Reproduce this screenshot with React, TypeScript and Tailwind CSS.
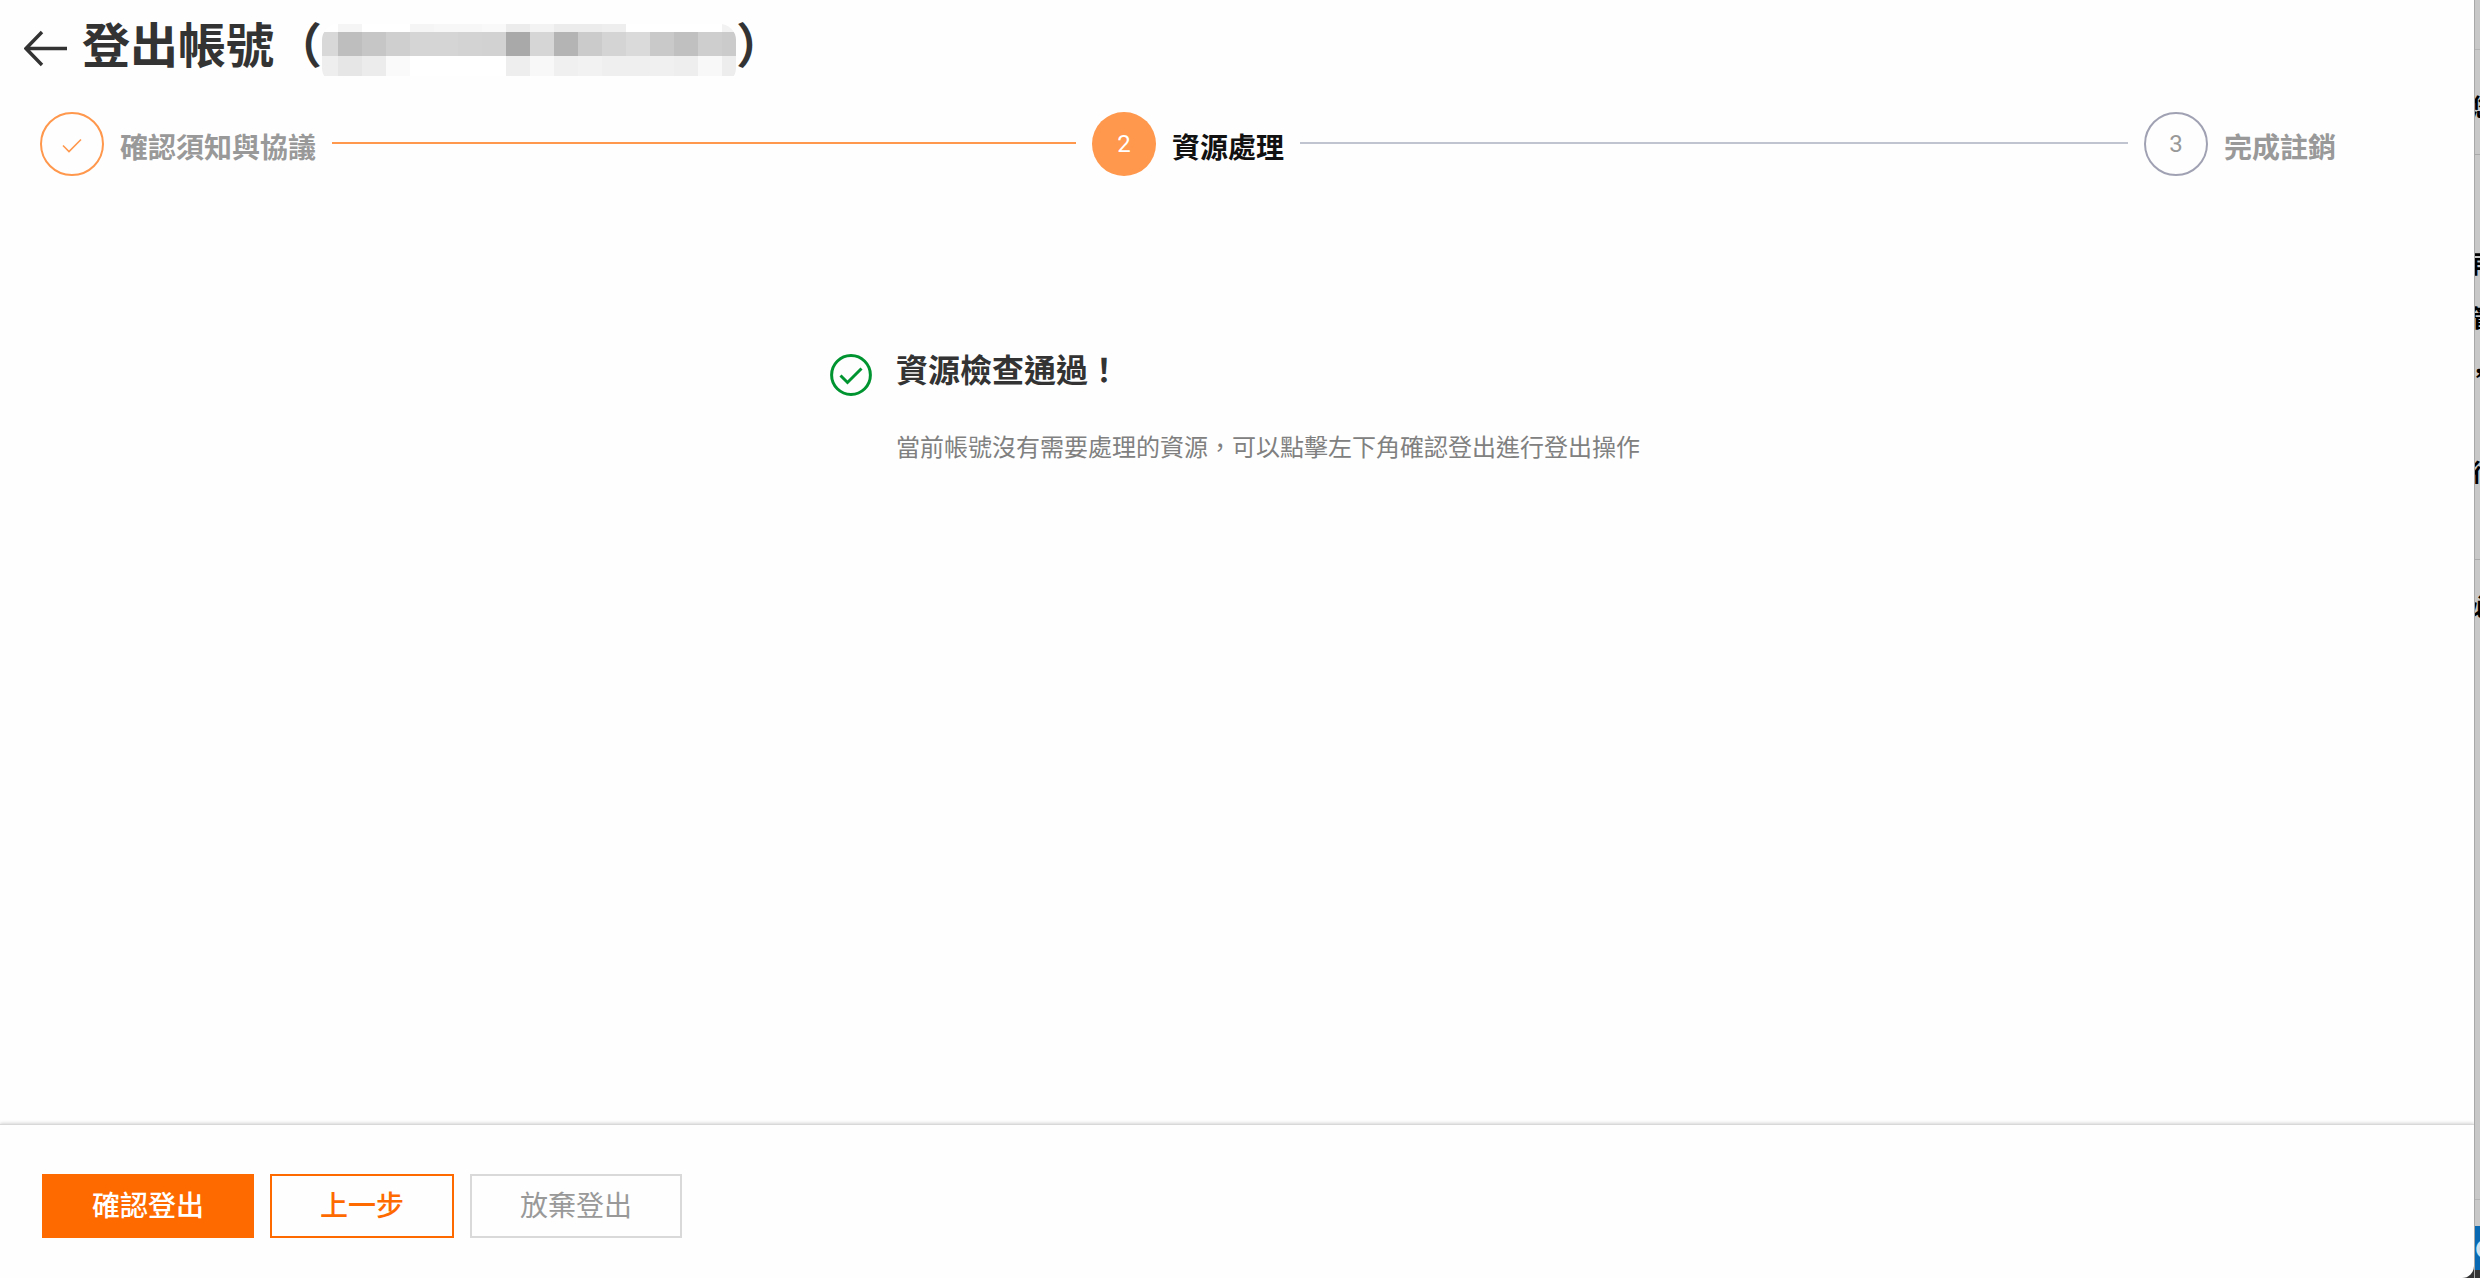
import React from "react";

const mosaicWidths = [
  "w-4", "w-6", "w-6", "w-6", "w-6", "w-6", "w-6", "w-6", "w-6",
  "w-6", "w-6", "w-6", "w-6", "w-6", "w-6", "w-6", "w-6", "w-3.5",
];
const mosaicTop = [
  "bg-white", "bg-[#f5f5f5]", "bg-white", "bg-white", "bg-[#f5f5f5]", "bg-[#f7f7f7]", "bg-[#f7f7f7]", "bg-[#f9f9f9]", "bg-[#ececec]",
  "bg-[#f3f3f3]", "bg-[#ececec]", "bg-[#ececec]", "bg-[#eeeeee]", "bg-white", "bg-white", "bg-white", "bg-white", "bg-[#f2f2f2]",
];
const mosaicMid = [
  "bg-[#d8d8d8]", "bg-[#bebebe]", "bg-[#c6c6c6]", "bg-[#cfcfcf]", "bg-[#d5d5d5]", "bg-[#d5d5d5]", "bg-[#d3d3d3]", "bg-[#d2d2d2]", "bg-[#a9a9a9]",
  "bg-[#d6d6d6]", "bg-[#b4b4b4]", "bg-[#cbcbcb]", "bg-[#d4d4d4]", "bg-[#dadada]", "bg-[#c9c9c9]", "bg-[#c0c0c0]", "bg-[#cecece]", "bg-[#cbcbcb]",
];
const mosaicBottom = [
  "bg-[#eeeeee]", "bg-[#e6e6e6]", "bg-[#ececec]", "bg-[#fafafa]", "bg-white", "bg-white", "bg-white", "bg-white", "bg-[#eeeeee]",
  "bg-[#f8f8f8]", "bg-[#f0f0f0]", "bg-[#f2f2f2]", "bg-[#efefef]", "bg-[#efefef]", "bg-[#f0f0f0]", "bg-[#eeeeee]", "bg-[#f8f8f8]", "bg-[#ededed]",
];

function MaskedAccount() {
  const rows = [
    { height: "h-2", colors: mosaicTop },
    { height: "h-6", colors: mosaicMid },
    { height: "h-5", colors: mosaicBottom },
  ];
  return (
    <span aria-hidden="true" className="mt-6 flex flex-col overflow-hidden rounded-2xl">
      {rows.map((row, r) => (
        <span key={r} className={`flex ${row.height}`}>
          {row.colors.map((color, i) => (
            <span key={i} className={`${mosaicWidths[i]} ${color}`} />
          ))}
        </span>
      ))}
    </span>
  );
}

function Steps() {
  return (
    <ol className="mt-6 flex px-10">
      <li className="flex flex-1 items-center">
        <span className="flex size-16 items-center justify-center rounded-full border-2 border-[#ff974c]">
          <svg viewBox="0 0 20 16" className="mt-1 h-4 w-5" fill="none" stroke="#ff974c" strokeWidth="1.6">
            <path d="M1 7.5 7 13.5 19 1.5" />
          </svg>
        </span>
        <span className="ml-4 pt-1 text-[28px] leading-8 font-bold text-[#999]">確認須知與協議</span>
        <span className="mx-4 mb-0.5 h-0.5 flex-1 bg-[#ff974c]" />
      </li>
      <li className="flex flex-1 items-center" aria-current="step">
        <span className="flex size-16 items-center justify-center rounded-full bg-[#ff974c] font-[Roboto] text-2xl text-white">2</span>
        <span className="ml-4 pt-1 text-[28px] leading-8 font-bold text-[#111]">資源處理</span>
        <span className="mx-4 mb-0.5 h-0.5 flex-1 bg-[#c0c3d0]" />
      </li>
      <li className="flex w-[290px] items-center">
        <span className="flex size-16 items-center justify-center rounded-full border-2 border-[#a0a2b3] font-[Roboto] text-2xl text-[#999]">3</span>
        <span className="ml-4 pt-1 text-[28px] leading-8 font-bold text-[#999]">完成註銷</span>
      </li>
    </ol>
  );
}

function PageBehind() {
  return (
    <aside aria-hidden="true" className="flex w-1.5 shrink-0 flex-col overflow-hidden border-l border-[#a8a8a8] bg-[#c8c8c8] text-2xl leading-8 font-bold text-black">
      <div className="h-[50px] shrink-0 border-b border-[#b4b4b4]" />
      <div className="h-[105px] shrink-0 border-b border-[#aaa] pt-10"><span className="-ml-1 block w-6">您</span></div>
      <div className="h-[405px] shrink-0 border-b border-[#aaa] pt-[92px]">
        <span className="-ml-1 block h-[54px] w-6">再</span>
        <span className="-ml-1 block h-[46px] w-6">管</span>
        <span className="block h-[108px] w-6">,</span>
        <span className="-ml-1 block w-6">行</span>
      </div>
      <div className="flex-1 border-b border-[#b4b4b4] pt-[30px]"><span className="-ml-1 block w-6">必</span></div>
      <div className="h-[26px] shrink-0" />
      <div className="flex h-11 shrink-0 items-center bg-[#0969b3] text-white/80"><span>C</span></div>
      <div className="h-2 shrink-0 bg-[#333]" />
    </aside>
  );
}

export default function App() {
  return (
    <div className="flex min-h-screen bg-[#333] font-['Noto_Sans_CJK_TC',sans-serif]">
      <main className="flex min-w-0 flex-1 flex-col overflow-hidden rounded-br-xl bg-[#fefefe]">
        <header className="flex h-[88px] items-start pl-6">
          <button type="button" aria-label="返回" className="mt-7">
            <svg viewBox="0 0 44 40" className="h-10 w-11" fill="none" stroke="#333" strokeWidth="3.4">
              <path d="M43 20.5H2M18 4 2 20.5 18 37" />
            </svg>
          </button>
          <h1 className="ml-3.5 flex text-5xl leading-[84px] font-bold text-[#333]">
            <span>登出帳號（</span>
            <MaskedAccount />
            <span>）</span>
          </h1>
        </header>
        <Steps />
        <section className="flex flex-1 items-start justify-center gap-6 pt-[168px] pr-1">
          <svg viewBox="0 0 42 42" className="mt-2.5 size-[42px]" fill="none" stroke="#009431" strokeWidth="3">
            <circle cx="21" cy="21" r="19.4" />
            <path d="M10.5 21.5 17.5 28.5 31.5 14.5" />
          </svg>
          <div>
            <h2 className="text-[32px] leading-[48px] font-bold text-[#333]">資源檢查通過！</h2>
            <p className="mt-9 text-2xl leading-9 text-[#808080]">當前帳號沒有需要處理的資源，可以點擊左下角確認登出進行登出操作</p>
          </div>
        </section>
        <footer className="flex h-[154px] items-start gap-4 border-t border-[#d8d8d8] px-[42px] pt-[49px] text-[28px] shadow-[0_-1px_3px_rgba(0,0,0,0.16)]">
          <button type="button" className="h-16 bg-[#ff6a00] px-[50px] pb-1 font-medium text-white">確認登出</button>
          <button type="button" className="h-16 border-2 border-[#ff6a00] px-12 pb-1 font-medium text-[#ff6a00]">上一步</button>
          <button type="button" className="h-16 border-2 border-[#d9d9d9] px-12 pb-1 text-[#999]">放棄登出</button>
        </footer>
      </main>
      <PageBehind />
    </div>
  );
}
